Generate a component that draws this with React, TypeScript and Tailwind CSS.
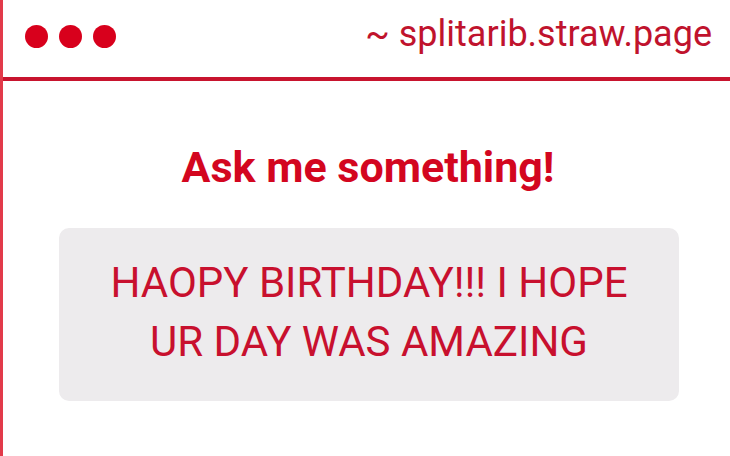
export default function App() {
  return (
    <div className="h-[456px] w-[730px] overflow-hidden border-l-[3px] border-[#e23a4a] bg-white font-['Roboto',_sans-serif]">
      <header className="flex h-[81px] items-start justify-between border-b-[4px] border-[#c8142e] pl-[22px] pr-[18px]">
        <div className="mt-[25px] flex gap-[11px]">
          <span className="h-[23px] w-[23px] rounded-full bg-[#d8001c]" />
          <span className="h-[23px] w-[23px] rounded-full bg-[#d8001c]" />
          <span className="h-[23px] w-[23px] rounded-full bg-[#d8001c]" />
        </div>
        <p className="mt-[16px] text-[36px] leading-none text-[#c0132d]">~ splitarib.straw.page</p>
      </header>
      <main className="flex flex-col items-center pt-[65px]">
        <h1 className="ml-[3px] text-[43px] font-bold leading-none text-[#d3061f]">Ask me something!</h1>
        <div className="mt-[39px] ml-[5px] w-[620px] rounded-[10px] bg-[#edebed] pb-[30px] pt-[25px] text-center text-[42px] leading-[59px] text-[#c8102e]">
          HAOPY BIRTHDAY!!! I HOPE
          <br />
          UR DAY WAS AMAZING
        </div>
      </main>
    </div>
  )
}
